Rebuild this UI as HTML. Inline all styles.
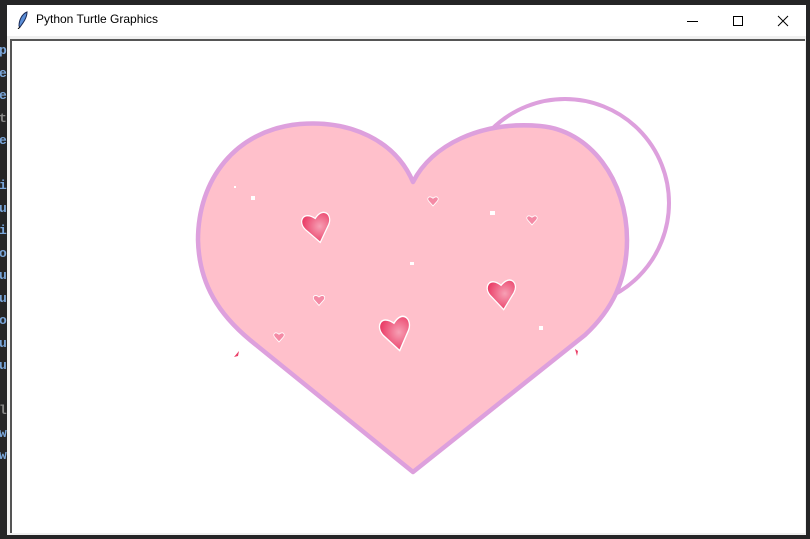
<!DOCTYPE html>
<html><head><style>
body{margin:0;width:810px;height:539px;background:#252526;position:relative;overflow:hidden;font-family:"Segoe UI","Liberation Sans",sans-serif}
.win{position:absolute;left:7px;top:5px;width:799px;height:530px;background:#f0f0f0}
.title{position:absolute;left:0;top:0;width:799px;height:31px;background:#fff}
.title span{position:absolute;left:29px;top:7px;font-size:12px;color:#000}
.canvas{position:absolute;left:3px;top:34px;width:793px;height:492px;background:#fff;border-top:2px solid #555;border-left:2px solid #555}
.code{position:absolute;left:-1px;top:40px;font:bold 13px "Liberation Mono",monospace;color:#7aa6da;line-height:22.5px;width:8px;overflow:hidden}
</style></head><body>
<div class="code">p<br>e<br>e<br><span style="color:#888">t</span><br>e<br><br>i<br>u<br>i<br>o<br>u<br>u<br>o<br>u<br>u<br><br><span style="color:#888">l</span><br>w<br>w</div>
<div class="win">
<div class="title">
<svg style="position:absolute;left:10px;top:6px" width="12" height="18" viewBox="0 0 12 18"><path d="M10,1 C5,3 2,9 2,15 L3,16 C6,12 10,7 10,1Z" fill="#5b8fd8" stroke="#1a2a55" stroke-width="1"/><path d="M3,16 L1,18" stroke="#000"/></svg>
<span>Python Turtle Graphics</span>
<svg style="position:absolute;left:670px;top:8px" width="125" height="16">
<path d="M10,8.5 H21" stroke="#000" stroke-width="1"/>
<rect x="56.5" y="3.5" width="9" height="9" fill="none" stroke="#000"/>
<path d="M101,3 L111,13 M111,3 L101,13" stroke="#000" stroke-width="1"/>
</svg>
</div>
<div class="canvas"></div>
</div>
<svg style="position:absolute;left:0;top:0" width="810" height="539">
<defs>
<radialGradient id="g" cx="0.6" cy="0.45" r="0.6"><stop offset="0" stop-color="#f7a0b5"/><stop offset="1" stop-color="#ea3f68"/></radialGradient>
<path id="h" d="M0,9 L-8,0 C-12,-5 -7,-11 0,-5 C7,-11 12,-5 8,0 Z"/>
</defs>
<circle cx="565" cy="203" r="104" fill="none" stroke="#dda0dd" stroke-width="4"/>
<path d="M413,182 C395,140 350,120 300,124 C235,130 198,180 198,240 C199,285 220,315 250,340 L413,472 L585,335 C612,310 627,280 627,240 C627,180 590,130 540,126 C480,121 432,145 413,182 Z" fill="#ffc0cb" stroke="#dda0dd" stroke-width="4.5" stroke-linejoin="round"/>
<g fill="url(#g)" stroke="#fff" stroke-width="0.8">
<use href="#h" transform="translate(317,227) rotate(-12) scale(1.5,1.75)"/>
<use href="#h" transform="translate(502,294) rotate(-6) scale(1.5,1.75)"/>
<use href="#h" transform="translate(396,333) rotate(-12) scale(1.6,2)"/>
</g>
<g fill="#f48aa5" stroke="#fff" stroke-width="1.5">
<use href="#h" transform="translate(433,201) scale(0.55)"/>
<use href="#h" transform="translate(532,220) scale(0.55)"/>
<use href="#h" transform="translate(319,300) scale(0.6)"/>
<use href="#h" transform="translate(279,337) scale(0.55)"/>
</g>
<g fill="#fff"><rect x="251" y="196" width="4" height="4"/><rect x="490" y="211" width="5" height="4"/><rect x="410" y="262" width="4" height="3"/><rect x="539" y="326" width="4" height="4"/><rect x="234" y="186" width="2" height="2"/></g>
<path d="M234,357 L239,351 L238,356Z M577,356 L575,349 L578,351Z" fill="#ea3f68"/>
</svg>
</body></html>
